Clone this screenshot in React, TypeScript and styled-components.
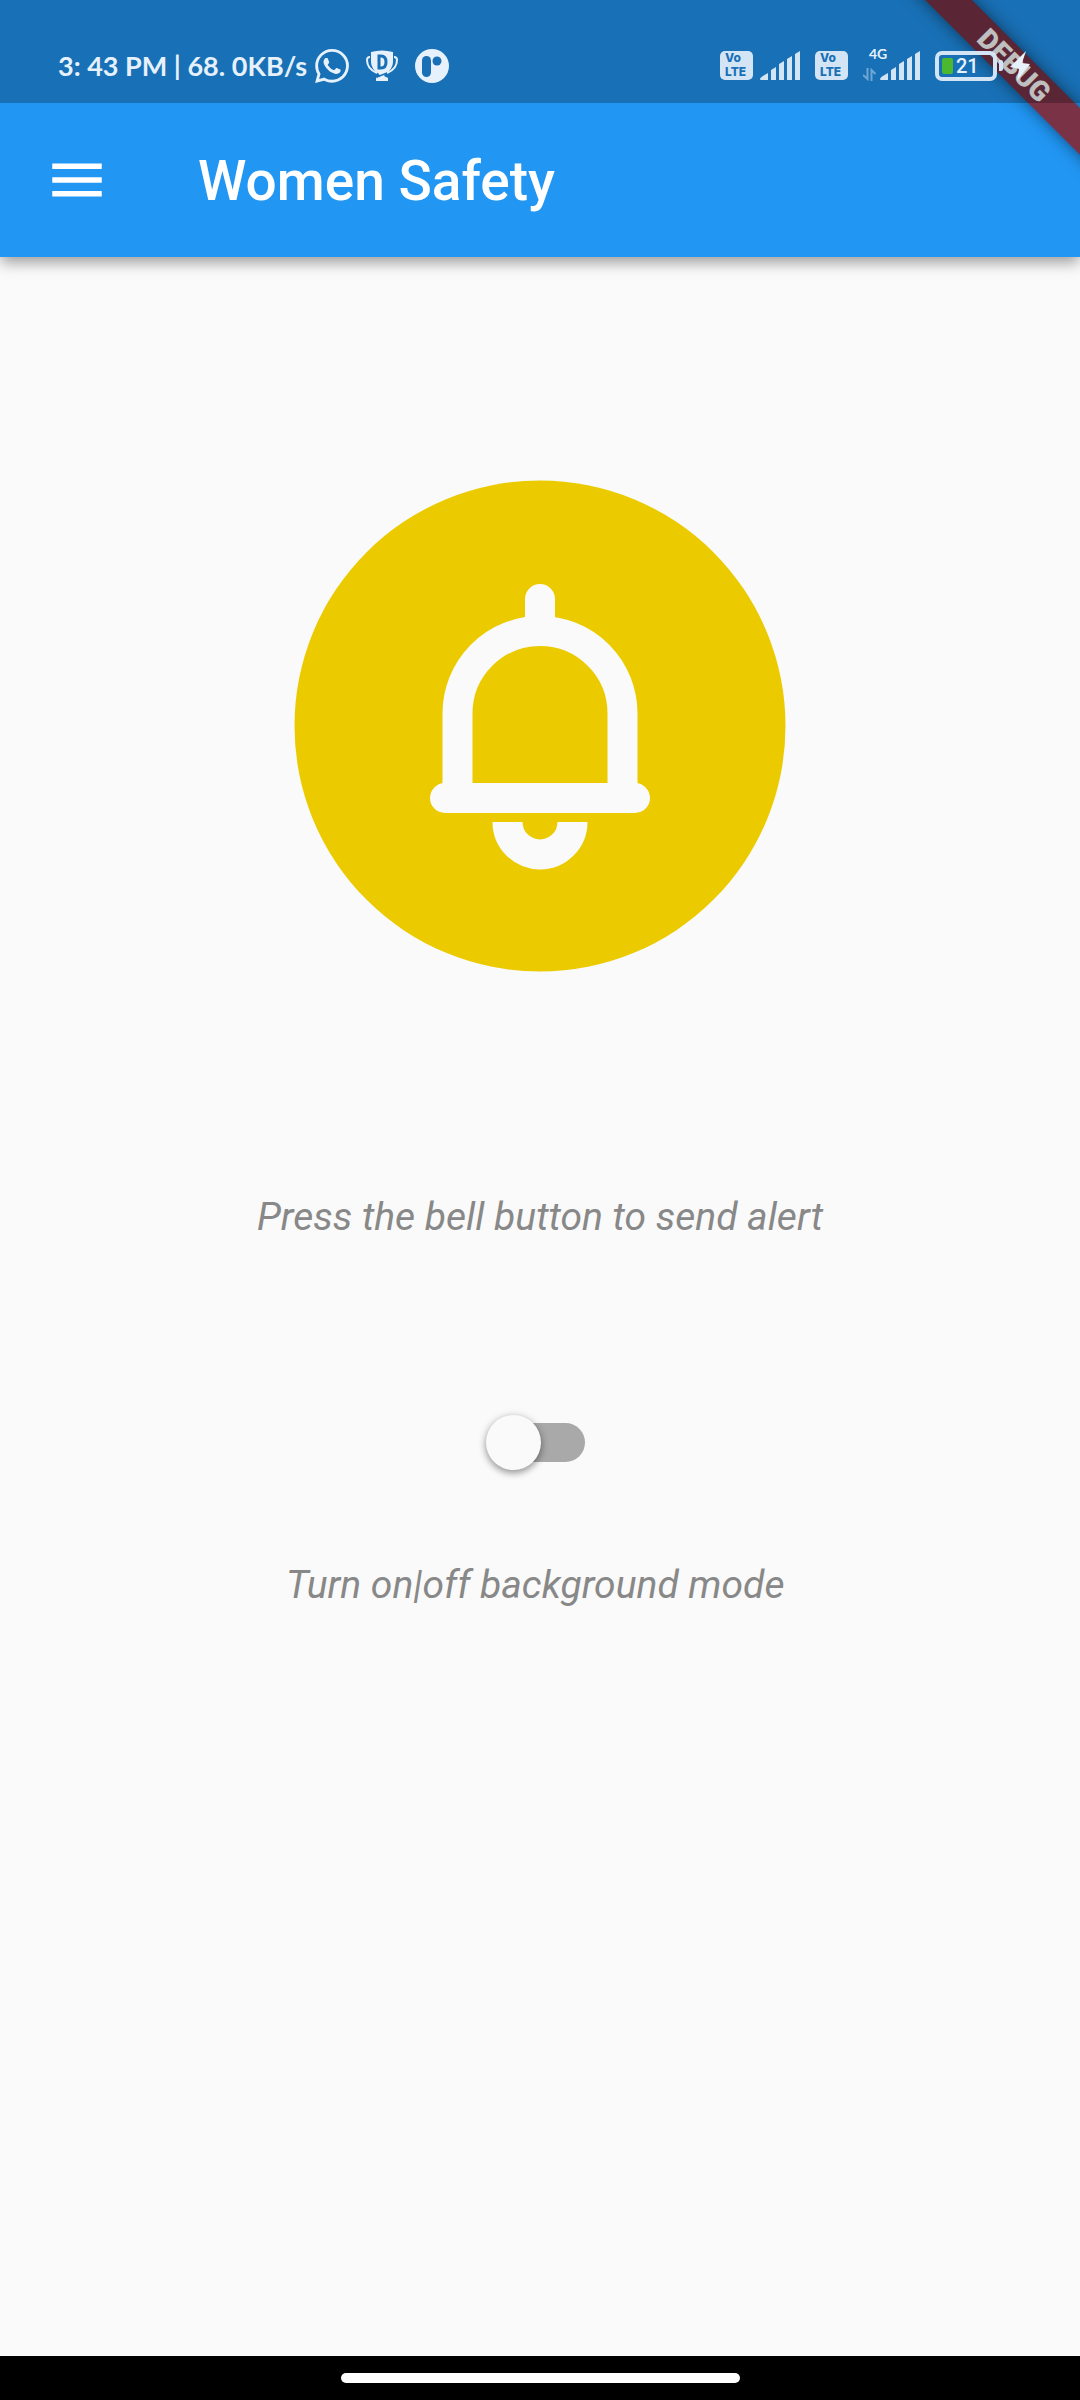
import React, { useState } from "react";
import styled, { createGlobalStyle } from "styled-components";
import { SiWhatsapp } from "react-icons/si";

const ink = "#e6f1fb";
const sans = `Roboto, "Liberation Sans", sans-serif`;

const GlobalStyle = createGlobalStyle`
  *, *::before, *::after { box-sizing: border-box; }
  body { margin: 0; background: #fafafa; font-family: ${sans}; }
  button { font: inherit; }
`;

const Screen = styled.div`
  min-height: 100vh;
  display: flex;
  flex-direction: column;
  background: #fafafa;
  overflow: hidden;
`;

const Header = styled.header`
  position: relative;
  background: #2196f3;
  box-shadow: 0 6px 14px -1px rgba(0, 0, 0, 0.4);
`;

const StatusBar = styled.div`
  position: relative;
  z-index: 2;
  height: 103px;
  padding: 28px 50px 0 58px;
  display: flex;
  align-items: center;
  justify-content: space-between;
  background: rgba(0, 0, 0, 0.25);
  color: ${ink};
`;

const Cluster = styled.div<{ $gap: number }>`
  display: flex;
  align-items: center;
  gap: ${(p) => p.$gap}px;
  svg { display: block; flex: none; }
`;

const Clock = styled.span`
  font: 700 27px/34px Lato, ${sans};
  white-space: pre;
`;

const Volte = styled.span`
  width: 33px;
  height: 29px;
  padding-left: 5px;
  border-radius: 5px;
  background: #d3e5f5;
  color: #1970b6;
  font: 800 12px/14px Inter, ${sans};
`;

const Network = styled.span`
  position: relative;
  display: flex;
  align-items: flex-end;
  gap: 4px;
`;

const NetworkType = styled.span`
  position: absolute;
  left: 6px;
  top: -4px;
  font: 700 14px/14px Lato, ${sans};
`;

const Battery = styled.span`
  display: flex;
  align-items: center;
  gap: 2px;
`;

const BatteryCase = styled.span`
  width: 62px;
  height: 30px;
  padding: 0 3px;
  display: flex;
  align-items: center;
  gap: 3px;
  border: 4px solid #d3e5f5;
  border-radius: 7px;
  font: 500 20px/22px ${sans};
`;

const BatteryLevel = styled.i`
  width: 11px;
  height: 16px;
  border-radius: 2px;
  background: #4cb82f;
`;

const BatteryTip = styled.i`
  width: 4px;
  height: 11px;
  border-radius: 0 2px 2px 0;
  background: #d3e5f5;
`;

const Toolbar = styled.div`
  height: 154px;
  padding: 0 44px;
  display: flex;
  align-items: center;
  gap: 88px;
`;

const IconButton = styled.button`
  display: block;
  padding: 0;
  border: 0;
  background: none;
  color: #fff;
  cursor: pointer;
  svg { display: block; }
`;

const Title = styled.h1`
  margin: 0;
  padding-top: 2px;
  color: #fff;
  font: 500 55px/64px ${sans};
`;

const BannerCorner = styled.div`
  position: absolute;
  z-index: 1;
  top: 0;
  right: 0;
  width: 257px;
  height: 257px;
  overflow: hidden;
  pointer-events: none;
`;

const Banner = styled.div`
  position: absolute;
  top: 49px;
  right: -134px;
  width: 400px;
  height: 33px;
  transform: rotate(45deg);
  background: rgba(144, 25, 26, 0.8);
  box-shadow: 0 0 16px rgba(0, 0, 0, 0.5);
  color: #fff;
  font: 900 28px/33px ${sans};
  text-align: center;
`;

const Main = styled.main`
  flex: 1;
  display: flex;
  flex-direction: column;
  align-items: center;
  padding-top: 223px;
`;

const Caption = styled.p`
  margin: 0;
  color: #888;
  font: italic 400 39px/47px ${sans};
  text-align: center;
  white-space: pre-wrap;
`;

const AlertCaption = styled(Caption)`
  margin-top: 222px;
`;

const SwitchField = styled.label`
  margin-top: 135px;
  display: flex;
  flex-direction: column;
  align-items: center;
  gap: 54px;
  cursor: pointer;
`;

const SwitchArea = styled.span`
  height: 132px;
  display: flex;
  align-items: center;
`;

const Switch = styled.input`
  appearance: none;
  width: 91px;
  height: 39px;
  margin: 0;
  display: flex;
  align-items: center;
  border-radius: 20px;
  background: #a9a9a9;
  cursor: pointer;

  &::before {
    content: "";
    flex: none;
    width: 55px;
    height: 55px;
    margin-left: -8px;
    border-radius: 50%;
    background: #fafafa;
    box-shadow: 0 3px 7px rgba(0, 0, 0, 0.35), 0 1px 10px rgba(0, 0, 0, 0.12);
  }
  &:checked { background: #90caf9; }
  &:checked::before { margin-left: 44px; background: #2196f3; }
`;

const NavigationBar = styled.footer`
  height: 44px;
  display: flex;
  align-items: center;
  justify-content: center;
  background: #000;
`;

const HomeHandle = styled.span`
  width: 399px;
  height: 10px;
  border-radius: 5px;
  background: #fff;
`;

const TrophyIcon = () => (
  <svg width="32" height="32" viewBox="0 0 32 32" fill="none">
    <path d="M4 7q-3 0-3 3 0 9 10 13M28 7q3 0 3 3 0 9-10 13" stroke={ink} strokeWidth="2" />
    <path d="M5 2q11-3 22 0v10q0 7-8 12l-1 2 4 2v3H10v-3l4-2-1-2q-8-5-8-12z" fill={ink} />
    <path d="M13 6h2q5 0 5 6t-5 6h-2z" stroke="#1970b6" strokeWidth="3" />
    <path d="M11 27l10-4" stroke="#1970b6" strokeWidth="1.500" />
  </svg>
);

const RoundIcon = () => (
  <svg width="34" height="34" viewBox="0 0 34 34">
    <circle cx="17" cy="17" r="17" fill={ink} />
    <rect x="7" y="7" width="9" height="21" rx="4.500" fill="#1970b6" />
    <circle cx="22" cy="12" r="4.500" fill="#1970b6" />
  </svg>
);

const SignalIcon = () => (
  <svg width="40" height="30" viewBox="0 0 40 30" fill="#d3e5f5">
    <path d="M0 28q0-2 8-6v7H1q-1 0-1-1zM11 19l5-3v13h-5zM19 13l5-3v19h-5zM27 8l5-3v24h-5zM35 3l5-3v29h-5z" />
  </svg>
);

const TransferIcon = () => (
  <svg width="13" height="13" viewBox="0 0 13 13" fill="none" stroke="#6fa7d4" strokeWidth="2">
    <path d="M4.500 0v11L0 7M8.500 13V2l4 4" />
  </svg>
);

const BoltIcon = () => (
  <svg width="20" height="30" viewBox="0 0 20 30" fill={ink}>
    <path d="M16 0L0 16l9 2-2 12L20 13l-8-1z" />
  </svg>
);

const MenuIcon = () => (
  <svg width="66" height="66" viewBox="0 0 24 24" fill="currentColor">
    <path d="M3 18h18v-2H3v2zm0-5h18v-2H3v2zm0-7v2h18V6H3z" />
  </svg>
);

const BellIcon = () => (
  <svg width="492" height="492" viewBox="0 0 492 492" fill="none" stroke="#fafafa" strokeWidth="30">
    <circle cx="246" cy="246" r="245.500" fill="#ebcb00" stroke="none" />
    <path d="M246 119v25M151 318h190" strokeLinecap="round" />
    <path d="M163.500 318V233.500a82.500 82.500 0 0 1 165 0V318" />
    <path d="M213.500 342a32.500 32.500 0 0 0 65 0" />
  </svg>
);

export default function App() {
  const [background, setBackground] = useState(false);
  return (
    <>
      <GlobalStyle />
      <Screen>
        <Header>
          <StatusBar>
            <Cluster $gap={17}>
              <Cluster $gap={8}>
                <Clock>3: 43 PM | 68. 0KB/s</Clock>
                <SiWhatsapp size={34} />
              </Cluster>
              <TrophyIcon />
              <RoundIcon />
            </Cluster>
            <Cluster $gap={15}>
              <Cluster $gap={7}>
                <Volte>Vo<br />LTE</Volte>
                <SignalIcon />
              </Cluster>
              <Volte>Vo<br />LTE</Volte>
              <Network>
                <NetworkType>4G</NetworkType>
                <TransferIcon />
                <SignalIcon />
              </Network>
              <Cluster $gap={7}>
                <Battery>
                  <BatteryCase><BatteryLevel />21</BatteryCase>
                  <BatteryTip />
                </Battery>
                <BoltIcon />
              </Cluster>
            </Cluster>
          </StatusBar>
          <Toolbar>
            <IconButton type="button" aria-label="Open menu"><MenuIcon /></IconButton>
            <Title>Women Safety</Title>
          </Toolbar>
          <BannerCorner><Banner>DEBUG</Banner></BannerCorner>
        </Header>
        <Main>
          <IconButton type="button" aria-label="Send alert"><BellIcon /></IconButton>
          <AlertCaption>Press the bell button to send alert</AlertCaption>
          <SwitchField>
            <SwitchArea>
              <Switch
                type="checkbox"
                role="switch"
                checked={background}
                onChange={(e) => setBackground(e.target.checked)}
              />
            </SwitchArea>
            <Caption as="span">Turn on|off background mode{"\u00a0"}</Caption>
          </SwitchField>
        </Main>
        <NavigationBar><HomeHandle /></NavigationBar>
      </Screen>
    </>
  );
}
